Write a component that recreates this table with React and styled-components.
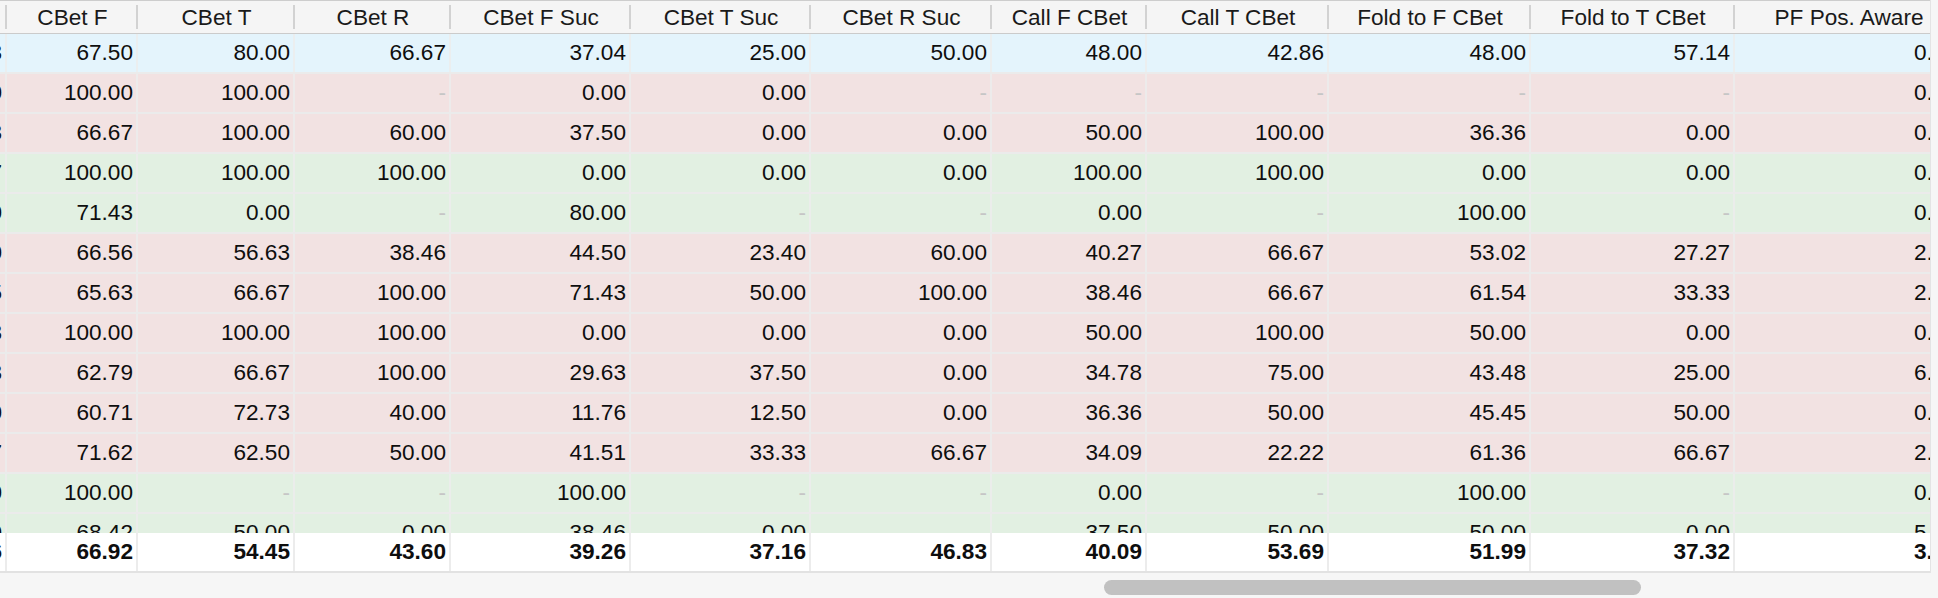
import React from 'react';
import styled, { createGlobalStyle } from 'styled-components';

const GlobalStyle = createGlobalStyle`
  html, body {
    margin: 0;
    padding: 0;
    background: #ffffff;
    overflow: hidden;
  }
  body {
    font-family: "Liberation Sans", Arial, Helvetica, sans-serif;
    color: #111111;
  }
`;

const columns = [
  { title: '', width: 7 },
  { title: 'CBet F', width: 131 },
  { title: 'CBet T', width: 157 },
  { title: 'CBet R', width: 156 },
  { title: 'CBet F Suc', width: 180 },
  { title: 'CBet T Suc', width: 180 },
  { title: 'CBet R Suc', width: 181 },
  { title: 'Call F CBet', width: 155 },
  { title: 'Call T CBet', width: 182 },
  { title: 'Fold to F CBet', width: 202 },
  { title: 'Fold to T CBet', width: 204 },
  { title: 'PF Pos. Aware', width: 228 },
];

const template = columns.map(c => `${c.width}px`).join(' ');

const rowTints = {
  blue: '#e4f4fc',
  red: '#f2e2e2',
  green: '#e2f0e2',
};

const rows = [
  { tint: 'blue', values: ['0.83', '67.50', '80.00', '66.67', '37.04', '25.00', '50.00', '48.00', '42.86', '48.00', '57.14', '0.43'] },
  { tint: 'red', values: ['0.00', '100.00', '100.00', '-', '0.00', '0.00', '-', '-', '-', '-', '-', '0.00'] },
  { tint: 'red', values: ['3.33', '66.67', '100.00', '60.00', '37.50', '0.00', '0.00', '50.00', '100.00', '36.36', '0.00', '0.50'] },
  { tint: 'green', values: ['1.67', '100.00', '100.00', '100.00', '0.00', '0.00', '0.00', '100.00', '100.00', '0.00', '0.00', '0.00'] },
  { tint: 'green', values: ['2.50', '71.43', '0.00', '-', '80.00', '-', '-', '0.00', '-', '100.00', '-', '0.67'] },
  { tint: 'red', values: ['4.10', '66.56', '56.63', '38.46', '44.50', '23.40', '60.00', '40.27', '66.67', '53.02', '27.27', '2.14'] },
  { tint: 'red', values: ['3.75', '65.63', '66.67', '100.00', '71.43', '50.00', '100.00', '38.46', '66.67', '61.54', '33.33', '2.00'] },
  { tint: 'red', values: ['0.33', '100.00', '100.00', '100.00', '0.00', '0.00', '0.00', '50.00', '100.00', '50.00', '0.00', '0.50'] },
  { tint: 'red', values: ['5.83', '62.79', '66.67', '100.00', '29.63', '37.50', '0.00', '34.78', '75.00', '43.48', '25.00', '6.00'] },
  { tint: 'red', values: ['2.00', '60.71', '72.73', '40.00', '11.76', '12.50', '0.00', '36.36', '50.00', '45.45', '50.00', '0.80'] },
  { tint: 'red', values: ['4.17', '71.62', '62.50', '50.00', '41.51', '33.33', '66.67', '34.09', '22.22', '61.36', '66.67', '2.33'] },
  { tint: 'green', values: ['1.00', '100.00', '-', '-', '100.00', '-', '-', '0.00', '-', '100.00', '-', '0.00'] },
  { tint: 'green', values: ['2.50', '68.42', '50.00', '0.00', '38.46', '0.00', '-', '37.50', '50.00', '50.00', '0.00', '5.00'] },
  { tint: 'red', values: ['1.20', '70.00', '60.00', '50.00', '42.86', '25.00', '0.00', '40.00', '50.00', '52.00', '33.33', '1.25'] },
];

const totals = ['3.46', '66.92', '54.45', '43.60', '39.26', '37.16', '46.83', '40.09', '53.69', '51.99', '37.32', '3.12'];

const Frame = styled.div`
  width: 1938px;
  height: 598px;
  display: flex;
  flex-direction: column;
  background: #f6f6f6;
`;

const Main = styled.div`
  display: flex;
  height: 573px;
`;

const Viewport = styled.div`
  width: 1930px;
  overflow: hidden;
  display: flex;
  flex-direction: column;
  background: #ffffff;
`;

const VTrack = styled.div`
  flex: 1;
  background: #f6f6f6;
  border-left: 1px solid #e4e4e4;
`;

const Grid = styled.div`
  display: grid;
  grid-template-columns: ${template};
  flex-shrink: 0;
`;

const HeaderRow = styled(Grid)`
  height: 34px;
  box-sizing: border-box;
  border-top: 1px solid #cdcdcd;
  border-bottom: 1px solid #cbcbcb;
  background: #f5f5f5;
`;

const HeaderCell = styled.div`
  display: flex;
  align-items: center;
  justify-content: center;
  padding-top: 2px;
  font-size: 22.6px;
  color: #1a1a1a;
  white-space: nowrap;
  overflow: hidden;
  background: linear-gradient(#d2d2d2, #d2d2d2) right 3px center / 2px 24px no-repeat;
  background-position: right 0 top 4px;
`;

const Body = styled.div`
  height: 499px;
  overflow: hidden;
  display: flex;
  flex-direction: column;
`;

const Row = styled(Grid)`
  height: 40px;
  box-sizing: border-box;
  background: ${p => rowTints[p.$tint]};
  border-bottom: 2px solid #ebebeb;
`;

const Cell = styled.div`
  display: flex;
  align-items: center;
  justify-content: flex-end;
  padding-right: 3px;
  border-right: 2px solid ${p => (p.$total ? '#ececec' : 'rgba(236, 236, 236, 0.85)')};
  font-size: 22.6px;
  font-weight: ${p => (p.$total ? 700 : 400)};
  color: ${p => (p.$empty ? '#c6c6c6' : '#0e0e0e')};
  white-space: nowrap;
  min-width: 0;
`;

const TotalsRow = styled(Grid)`
  height: 40px;
  box-sizing: border-box;
  background: #ffffff;
  border-bottom: 2px solid #e2e2e2;
`;

const HScrollBar = styled.div`
  height: 25px;
  box-sizing: border-box;
  padding-top: 7px;
  background: #f6f6f6;
`;

const HThumb = styled.div`
  height: 15px;
  border-radius: 8px;
  background: #c1c1c1;
  margin-left: ${p => p.$offset}px;
  width: ${p => p.$size}px;
`;

const ValueCell = ({ value, total }) => (
  <Cell $total={total} $empty={value === '-'}>{value}</Cell>
);

const App = () => (
  <>
    <GlobalStyle />
    <Frame>
      <Main>
        <Viewport>
          <HeaderRow>
            {columns.map((c, i) => (
              <HeaderCell key={i}>{c.title}</HeaderCell>
            ))}
          </HeaderRow>
          <Body>
            {rows.map((r, i) => (
              <Row key={i} $tint={r.tint}>
                {r.values.map((v, j) => (
                  <ValueCell key={j} value={v} />
                ))}
              </Row>
            ))}
          </Body>
          <TotalsRow>
            {totals.map((v, j) => (
              <ValueCell key={j} value={v} total />
            ))}
          </TotalsRow>
        </Viewport>
        <VTrack />
      </Main>
      <HScrollBar>
        <HThumb $offset={1104} $size={537} />
      </HScrollBar>
    </Frame>
  </>
);

export default App;
